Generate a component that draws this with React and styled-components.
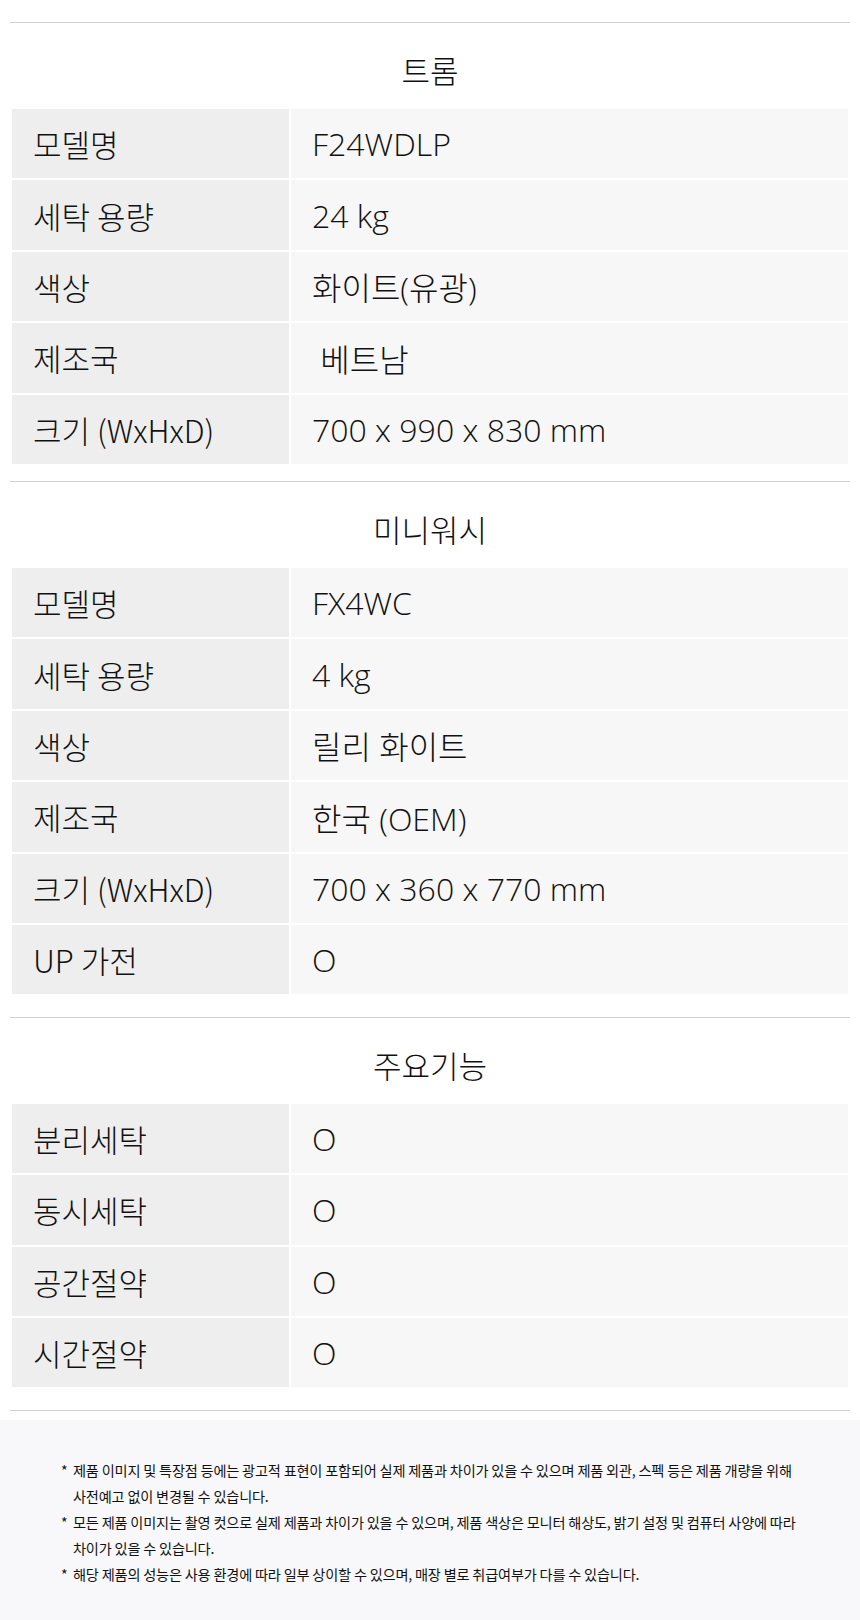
import React from "react";
import styled, { createGlobalStyle } from "styled-components";

// 기본 스타일
const GlobalStyle = createGlobalStyle`
  body {
    margin: 0;
    background: #fff;
  }
`;

const Page = styled.div`
  padding-top: 22px;
  font-family: "Noto Sans CJK KR", sans-serif;
  color: #111;
  word-break: keep-all;
`;

const Rule = styled.hr`
  margin: 0 10px;
  border: 0;
  height: 1px;
  background: #d0d0d0;
`;

const Section = styled.section`
  margin: 0 10px;
  padding-bottom: ${(p) => p.$tail}px;
`;

const Title = styled.h2`
  margin: 0;
  padding-top: 10px;
  height: 74px;
  line-height: 74px;
  text-align: center;
  font-size: 31px;
  font-weight: 300;
  color: #111;
`;

const Table = styled.table`
  width: 100%;
  border-collapse: separate;
  border-spacing: 2px;
  table-layout: fixed;
`;

const Label = styled.th`
  box-sizing: border-box;
  width: 277px;
  height: 69.4px;
  padding: 0 0 0 21px;
  background: #eeeeee;
  text-align: left;
  vertical-align: middle;
  font-size: 31px;
  font-weight: 300;
  color: #111;
`;

const Value = styled.td`
  box-sizing: border-box;
  height: 69.4px;
  padding: 0 0 0 21px;
  background: #f7f7f7;
  vertical-align: middle;
  font-family: "Open Sans", "Noto Sans CJK KR", sans-serif;
  font-size: 32px;
  font-weight: 300;
  color: #111;
`;

const Notice = styled.div`
  margin-top: 9px;
  padding: 37px 50px 34px 61px;
  background: #f8f8fa;
`;

const Note = styled.div`
  display: flex;
  font-size: 14.2px;
  line-height: 26px;
  letter-spacing: -0.2px;
  color: #111;
`;

const Star = styled.span`
  flex: 0 0 12px;
`;

const sections = [
  {
    title: "트롬",
    tail: 15,
    rows: [
      ["모델명", "F24WDLP"],
      ["세탁 용량", "24 kg"],
      ["색상", "화이트(유광)"],
      ["제조국", "\u00a0베트남"],
      ["크기 (WxHxD)", "700 x 990 x 830 mm"],
    ],
  },
  {
    title: "미니워시",
    tail: 20.6,
    rows: [
      ["모델명", "FX4WC"],
      ["세탁 용량", "4 kg"],
      ["색상", "릴리 화이트"],
      ["제조국", "한국 (OEM)"],
      ["크기 (WxHxD)", "700 x 360 x 770 mm"],
      ["UP 가전", "O"],
    ],
  },
  {
    title: "주요기능",
    tail: 20.6,
    rows: [
      ["분리세탁", "O"],
      ["동시세탁", "O"],
      ["공간절약", "O"],
      ["시간절약", "O"],
    ],
  },
];

const notes = [
  "제품 이미지 및 특장점 등에는 광고적 표현이 포함되어 실제 제품과 차이가 있을 수 있으며 제품 외관, 스펙 등은 제품 개량을 위해 사전예고 없이 변경될 수 있습니다.",
  "모든 제품 이미지는 촬영 컷으로 실제 제품과 차이가 있을 수 있으며, 제품 색상은 모니터 해상도, 밝기 설정 및 컴퓨터 사양에 따라 차이가 있을 수 있습니다.",
  "해당 제품의 성능은 사용 환경에 따라 일부 상이할 수 있으며, 매장 별로 취급여부가 다를 수 있습니다.",
];

const App = () => {
  return (
    <Page>
      <GlobalStyle />
      {sections.map((s) => (
        <React.Fragment key={s.title}>
          <Rule />
          <Section $tail={s.tail}>
            <Title>{s.title}</Title>
            <Table>
              <tbody>
                {s.rows.map(([k, v]) => (
                  <tr key={k}>
                    <Label>{k}</Label>
                    <Value>{v}</Value>
                  </tr>
                ))}
              </tbody>
            </Table>
          </Section>
        </React.Fragment>
      ))}
      <Rule />
      <Notice>
        {notes.map((n) => (
          <Note key={n}>
            <Star>*</Star>
            <span>{n}</span>
          </Note>
        ))}
      </Notice>
    </Page>
  );
};

export default App;
